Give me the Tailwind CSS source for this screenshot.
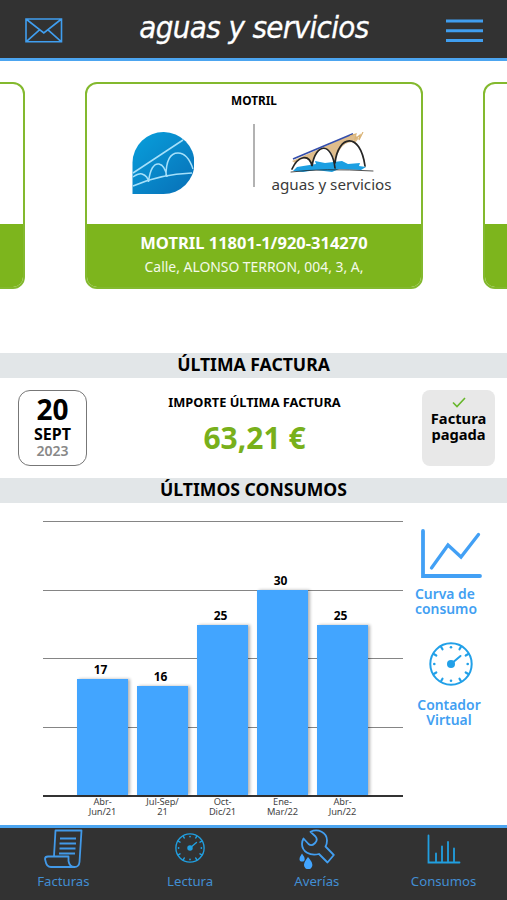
<!DOCTYPE html>
<html lang="es">
<head>
<meta charset="utf-8">
<title>Aguas y servicios</title>
<script src="https://cdn.jsdelivr.net/npm/@tailwindcss/browser@4"></script>
</head>
<body class="w-[507px] h-[900px] overflow-hidden bg-white font-['Noto_Sans',sans-serif] text-black flex flex-col">
<svg class="hidden">
  <defs>
    <symbol id="dial" viewBox="0 0 44 44">
      <g fill="none" stroke="currentColor" stroke-width="2" stroke-linecap="round">
        <circle cx="22" cy="22" r="20.700"/>
        <path d="M22 22 31.500 14"/>
        <path stroke-width="2.200" d="M12 4.700l1.500 2.600M32 4.700l-1.500 2.600M4.700 12l2.600 1.500M39.300 12l-2.600 1.500M4.700 32l2.600-1.500M39.300 32l-2.600-1.500M12 39.300l1.500-2.600M32 39.300l-1.500-2.600"/>
      </g>
      <g fill="currentColor"><circle cx="22" cy="22" r="4"/><circle cx="22" cy="5.300" r="1.300"/><circle cx="22" cy="38.700" r="1.300"/><circle cx="5.300" cy="22" r="1.300"/><circle cx="38.700" cy="22" r="1.300"/></g>
    </symbol>
  </defs>
</svg>

<header class="h-[61px] shrink-0 bg-[#323232] border-b-3 border-[#4ca5f0] flex items-start justify-between pl-[25px] pr-[24px]">
  <svg class="mt-[18px] w-[38px] h-[25px]" viewBox="0 0 38 25" fill="none" stroke="#409eef" stroke-width="1.6"><path d="M1 1h35.500v22.800H1zM1 1l17.800 14L36.500 1M1 23.800l13.500-12M36.500 23.800 23 11.800"/></svg>
  <h1 class="mt-[8px] text-[31px] leading-[38px] italic text-white tracking-[-0.650px] font-['DejaVu_Sans_Condensed','DejaVu_Sans',sans-serif] [font-stretch:condensed] [-webkit-text-stroke:0.300px_white] whitespace-nowrap">aguas y servicios</h1>
  <svg class="mt-[18px] w-[38px] h-[25px]" viewBox="0 0 38 25" stroke="#409eef" stroke-width="3"><path d="M1 3h37M1 12.700h37M1 22.500h37"/></svg>
</header>

<section class="mt-[21px] h-[207px] shrink-0 flex justify-center gap-[60px] overflow-hidden pl-px">
  <div class="w-[338px] shrink-0 rounded-xl border-2 border-[#83b92e] overflow-hidden flex flex-col justify-end"><div class="h-[63px] bg-[#7db51d]"></div></div>
  <div class="w-[338px] shrink-0 rounded-xl border-2 border-[#83b92e] overflow-hidden flex flex-col">
    <div class="h-[140px] shrink-0 flex flex-col items-center">
      <h2 class="mt-[7px] text-[11.800px] leading-[18px] font-bold">MOTRIL</h2>
      <div class="self-stretch flex mt-[15px]">
        <svg class="ml-[45px] mt-[7px] w-[62px] h-[64px]" viewBox="0 0 62 64">
          <defs><linearGradient id="drop" x1="0" y1="0" x2="0.900" y2="1"><stop offset="0" stop-color="#08a0dc"/><stop offset="1" stop-color="#0871b8"/></linearGradient></defs>
          <path fill="url(#drop)" d="M.5 63V31.500A31 31 0 1 1 31.500 63z"/>
          <g fill="none" stroke="#a5e0fa" stroke-width="1.500"><path d="M1 42 51 9M1 55Q28 43 60 42"/><path d="M1 46Q7 42 10 43 16 45 16.500 51M16.500 51C18 38 22 32 27 33 32 34 34 40 35 46M34 45C34 31 38 22 46 22 53 22 58 29 61 38"/></g>
        </svg>
        <div class="ml-[59px] w-[2px] h-[63px] bg-[#b2b2b2]"></div>
        <div class="ml-[16px] flex flex-col items-center w-[121px]">
          <svg class="mt-[8px] ml-[2px] w-[88px] h-[42px]" viewBox="0 0 88 42">
            <path fill="#dfbd8c" d="M3 29 64 2 70 6 66 11C56 7 48 18 46 32 44 20 40 16 34 17 28 18 25 26 23 33 21 26 14 24 6 31z"/>
            <path fill="#1c9fe2" d="M8 35 27 32 26 29 36 31 53 29 59 32 71 31 70 34 77 35 72 38 50 37 43 40 27 38 14 40 4 39z"/>
            <g fill="none" stroke="#252525" stroke-width="1.700" stroke-linecap="round"><path d="M3 37C9 24 20 21 23 34 27 10 43 10 46 36M46 31C49 3 71-1 76 34"/><path stroke-width=".8" d="M2 40Q34 36 84 39"/></g>
            <path fill="none" stroke="#344eab" stroke-width="1.700" d="M4 27 64 1.800"/>
            <path fill="none" stroke="#dab477" stroke-width="1.200" d="M61 4l6-2-1 5 5-4-1 5 4-8"/>
          </svg>
          <p class="text-[15.200px] leading-[20px] text-[#3a3a3a] whitespace-nowrap">aguas y servicios</p>
        </div>
      </div>
    </div>
    <div class="flex-1 bg-[#7db51d] text-center text-white">
      <p class="mt-[8px] text-[16.500px] leading-[22px] font-bold">MOTRIL 11801-1/920-314270</p>
      <p class="mt-[2px] text-[13.900px] leading-[22px] text-[#f4fae8]">Calle, ALONSO TERRON, 004, 3, A,</p>
    </div>
  </div>
  <div class="w-[338px] shrink-0 rounded-xl border-2 border-[#83b92e] overflow-hidden flex flex-col justify-end"><div class="h-[63px] bg-[#7db51d]"></div></div>
</section>

<h2 class="mt-[64px] h-[25px] shrink-0 bg-[#e2e6e8] text-center text-[17.600px] leading-[23px] font-bold">ÚLTIMA FACTURA</h2>
<section class="h-[100px] shrink-0 flex justify-between pl-[18px] pr-[12px] pt-[12px]">
  <div class="w-[69px] h-[76px] border border-[#777] rounded-xl text-center font-bold">
    <p class="mt-[4px] text-[28px] leading-[28px]">20</p>
    <p class="text-[16px] leading-[22px]">SEPT</p>
    <p class="text-[14px] leading-[12px] font-semibold text-[#888]">2023</p>
  </div>
  <div class="text-center font-bold">
    <p class="mt-[3px] text-[12.800px] leading-[18px]">IMPORTE ÚLTIMA FACTURA</p>
    <p class="mt-[9px] text-[30px] leading-[36px] text-[#78b01b]">63,21 €</p>
  </div>
  <div class="w-[73px] h-[76px] rounded-lg bg-[#e8e8e8] text-center text-[14.700px] leading-[16px] font-bold flex flex-col items-center">
    <svg class="mt-[7px] w-[14px] h-[11px]" viewBox="0 0 14 11" fill="none" stroke="#67b72b" stroke-width="1.600"><path d="M1 5.500 5 9.500 13 1"/></svg>
    <p class="mt-[2px]">Factura<br>pagada</p>
  </div>
</section>
<h2 class="h-[25px] shrink-0 bg-[#e2e6e8] text-center text-[17.600px] leading-[23px] font-bold">ÚLTIMOS CONSUMOS</h2>

<main class="h-[322px] shrink-0 flex pl-[43px]">
  <div class="w-[360px] pt-[18px]">
    <div class="grid h-[276px]">
      <div class="col-start-1 row-start-1 flex flex-col justify-between">
        <i class="h-px bg-[#858585]"></i><i class="h-px bg-[#858585]"></i><i class="h-px bg-[#858585]"></i><i class="h-px bg-[#858585]"></i><i class="h-[2px] bg-[#333]"></i>
      </div>
      <div class="col-start-1 row-start-1 flex items-end gap-[9px] pl-[34px] pb-[2px] text-center text-[12px] leading-[16px] font-bold">
        <div class="w-[51px]"><p class="pr-[4px] pb-px">17</p><div class="bg-[#42a5ff] shadow-[2px_0_3px_rgba(0,0,0,.3)]" style="height:116px"></div></div>
        <div class="w-[51px]"><p class="pr-[4px] pb-px">16</p><div class="bg-[#42a5ff] shadow-[2px_0_3px_rgba(0,0,0,.3)]" style="height:109px"></div></div>
        <div class="w-[51px]"><p class="pr-[4px] pb-px">25</p><div class="bg-[#42a5ff] shadow-[2px_0_3px_rgba(0,0,0,.3)]" style="height:170px"></div></div>
        <div class="w-[51px]"><p class="pr-[4px] pb-px">30</p><div class="bg-[#42a5ff] shadow-[2px_0_3px_rgba(0,0,0,.3)]" style="height:205px"></div></div>
        <div class="w-[51px]"><p class="pr-[4px] pb-px">25</p><div class="bg-[#42a5ff] shadow-[2px_0_3px_rgba(0,0,0,.3)]" style="height:170px"></div></div>
      </div>
    </div>
    <div class="flex gap-[9px] pl-[34px] text-center text-[9.300px] leading-[10px] text-[#444] tracking-[-0.100px]">
      <p class="w-[51px]">Abr-<br>Jun/21</p><p class="w-[51px]">Jul-Sep/<br>21</p><p class="w-[51px]">Oct-<br>Dic/21</p><p class="w-[51px]">Ene-<br>Mar/22</p><p class="w-[51px]">Abr-<br>Jun/22</p>
    </div>
  </div>
  <aside class="ml-[12px] pt-[25px] text-[#429ff2] text-[13.900px] leading-[15px] font-semibold">
    <svg class="ml-[5px] w-[62px] h-[51px]" viewBox="0 0 62 51" fill="none" stroke="#42a0f5" stroke-width="3.800" stroke-linecap="round"><path d="M3 3v45h57"/><path stroke-width="3.300" d="M11.500 40 28 17 41 29 58.500 6.500"/></svg>
    <p class="mt-[7px] whitespace-nowrap">Curva de<br>consumo</p>
    <svg class="mt-[26px] ml-[14px] w-[44px] h-[44px] text-[#22a0e8]"><use href="#dial"/></svg>
    <p class="mt-[11px] -ml-px w-[70px] text-center">Contador<br>Virtual</p>
  </aside>
</main>

<nav class="h-[75px] shrink-0 bg-[#323232] border-t-3 border-[#4ca5f0] grid grid-cols-4 text-[#428ed2] text-[13.200px] leading-[18px] text-center">
  <div>
    <svg class="mx-auto w-[40px] h-[40px] mt-[1px]" viewBox="0 0 40 40" fill="none" stroke="#4299e8" stroke-width="1.800" stroke-linejoin="round"><path d="M11 27 12.500 1.500H38.500L36.500 33Q36 38 31.500 38H8Q3.500 38 2.500 32L2 30Q2 27.500 5 27.500H25.500V32Q26.500 38 31.500 38"/><path d="M17 9.500h16M16.500 14.500h16.500M16.500 19.500h16M16 24.500h16"/></svg>
    <p class="mt-[3px]">Facturas</p>
  </div>
  <div>
    <svg class="mx-auto w-[30px] h-[30px] mt-[5px] mb-[6px] text-[#219fe0]"><use href="#dial"/></svg>
    <p class="mt-[9px]">Lectura</p>
  </div>
  <div>
    <svg class="mx-auto w-[36px] h-[40px] mt-[1px]" viewBox="0 0 36 40"><path fill="none" stroke="#429ef0" stroke-width="1.800" stroke-linejoin="round" d="M4.500 9.500 9.500 15Q12.500 17.500 15.500 14.500L16.500 13.500Q19 10.500 16.500 7.500L11.500 2.800C19-.8 28 3.500 28 11.500Q28 15 26.500 17.500L34.800 26 28.500 33.500 20 25C11 27.500 3 22.500 3 15Q3 12 4.500 9.500z"/><g fill="#42a5ff"><path d="M3 24.500Q.5 28 .5 30A2.600 2.600 0 0 0 5.700 30Q5.700 28 3 24.500zM9 28Q5 33 5 36A4.200 4.200 0 0 0 13.400 36Q13.400 33 9 28z"/></g></svg>
    <p class="mt-[3px]">Averías</p>
  </div>
  <div>
    <svg class="mx-auto w-[34px] h-[30px] mt-[6px] mb-[5px]" viewBox="0 0 34 30" fill="none" stroke="#219fe0" stroke-width="1.800" stroke-linecap="round"><path d="M1.500 1.500v27h31M9 27V19.500M15 27V12.500M21 27V8M27 27V14.500"/></svg>
    <p class="mt-[8px]">Consumos</p>
  </div>
</nav>
</body>
</html>
